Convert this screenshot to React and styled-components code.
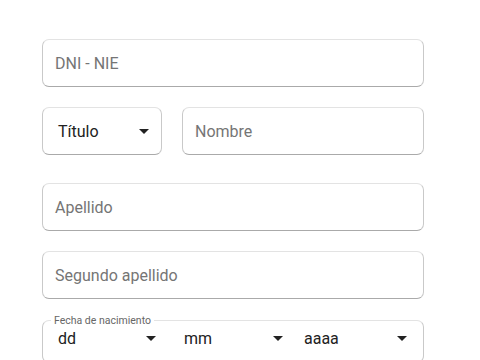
import React from "react";
import styled, { createGlobalStyle } from "styled-components";

const GlobalStyle = createGlobalStyle`
  html, body {
    margin: 0;
    padding: 0;
    background: #ffffff;
    font-family: Roboto, "Noto Sans", Arial, sans-serif;
  }
`;

const StyledPage = styled.div`
  width: 480px;
  height: 360px;
  overflow: hidden;
  padding: 39px 0 0 42px;
  box-sizing: border-box;
`;

const StyledForm = styled.form`
  width: 382px;
  display: flex;
  flex-direction: column;
  gap: 20px;
`;

const StyledRow = styled.div`
  display: flex;
  gap: 20px;
  margin-top: ${(p) => (p.$extra ? `${p.$extra}px` : "0")};
`;

const StyledField = styled.div`
  flex: ${(p) => (p.$width ? `0 0 ${p.$width}px` : "1")};
  height: 48px;
  box-sizing: border-box;
  border: 1px solid #c9c9c9;
  border-top-color: #e3e3e3;
  border-bottom-color: #aaaaaa;
  border-radius: 7px;
  display: flex;
  align-items: center;
  justify-content: space-between;
  padding: 0 ${(p) => (p.$select ? "12px 0 15px" : "12px")};
  font-size: 16px;
  color: ${(p) => (p.$filled ? "#222222" : "#757575")};
`;

const StyledArrow = styled.span`
  width: 0;
  height: 0;
  border-left: 5px solid transparent;
  border-right: 5px solid transparent;
  border-top: 5px solid #222222;
`;

const StyledFieldset = styled.fieldset`
  margin: -5px 0 0;
  padding: 0 0 14px 8px;
  border: 1px solid #c9c9c9;
  border-top-color: #e3e3e3;
  border-radius: 7px;
  min-width: 0;
`;

const StyledLegend = styled.legend`
  padding: 0 3px;
  font-size: 10.5px;
  color: #666666;
`;

const StyledDateRow = styled.div`
  display: flex;
  padding: 1px 0 0 7px;
`;

const StyledDateSelect = styled.div`
  width: ${(p) => p.$width}px;
  margin-right: ${(p) => p.$after || 0}px;
  display: flex;
  align-items: center;
  justify-content: space-between;
  font-size: 16px;
  color: #222222;
  height: 20px;
`;

const Select = ({ label, width }) => (
  <StyledField $select $filled $width={width}>
    <span>{label}</span>
    <StyledArrow />
  </StyledField>
);

const DateSelect = ({ label, width, after }) => (
  <StyledDateSelect $width={width} $after={after}>
    <span>{label}</span>
    <StyledArrow />
  </StyledDateSelect>
);

const App = () => {
  return (
    <StyledPage>
      <GlobalStyle />
      <StyledForm>
        <StyledRow>
          <StyledField>DNI - NIE</StyledField>
        </StyledRow>
        <StyledRow>
          <Select label="Título" width={120} />
          <StyledField>Nombre</StyledField>
        </StyledRow>
        <StyledRow $extra={8}>
          <StyledField>Apellido</StyledField>
        </StyledRow>
        <StyledRow>
          <StyledField>Segundo apellido</StyledField>
        </StyledRow>
        <StyledFieldset>
          <StyledLegend>Fecha de nacimiento</StyledLegend>
          <StyledDateRow>
            <DateSelect label="dd" width={98} after={28} />
            <DateSelect label="mm" width={99} after={21} />
            <DateSelect label="aaaa" width={103} />
          </StyledDateRow>
        </StyledFieldset>
      </StyledForm>
    </StyledPage>
  );
};

export default App;
